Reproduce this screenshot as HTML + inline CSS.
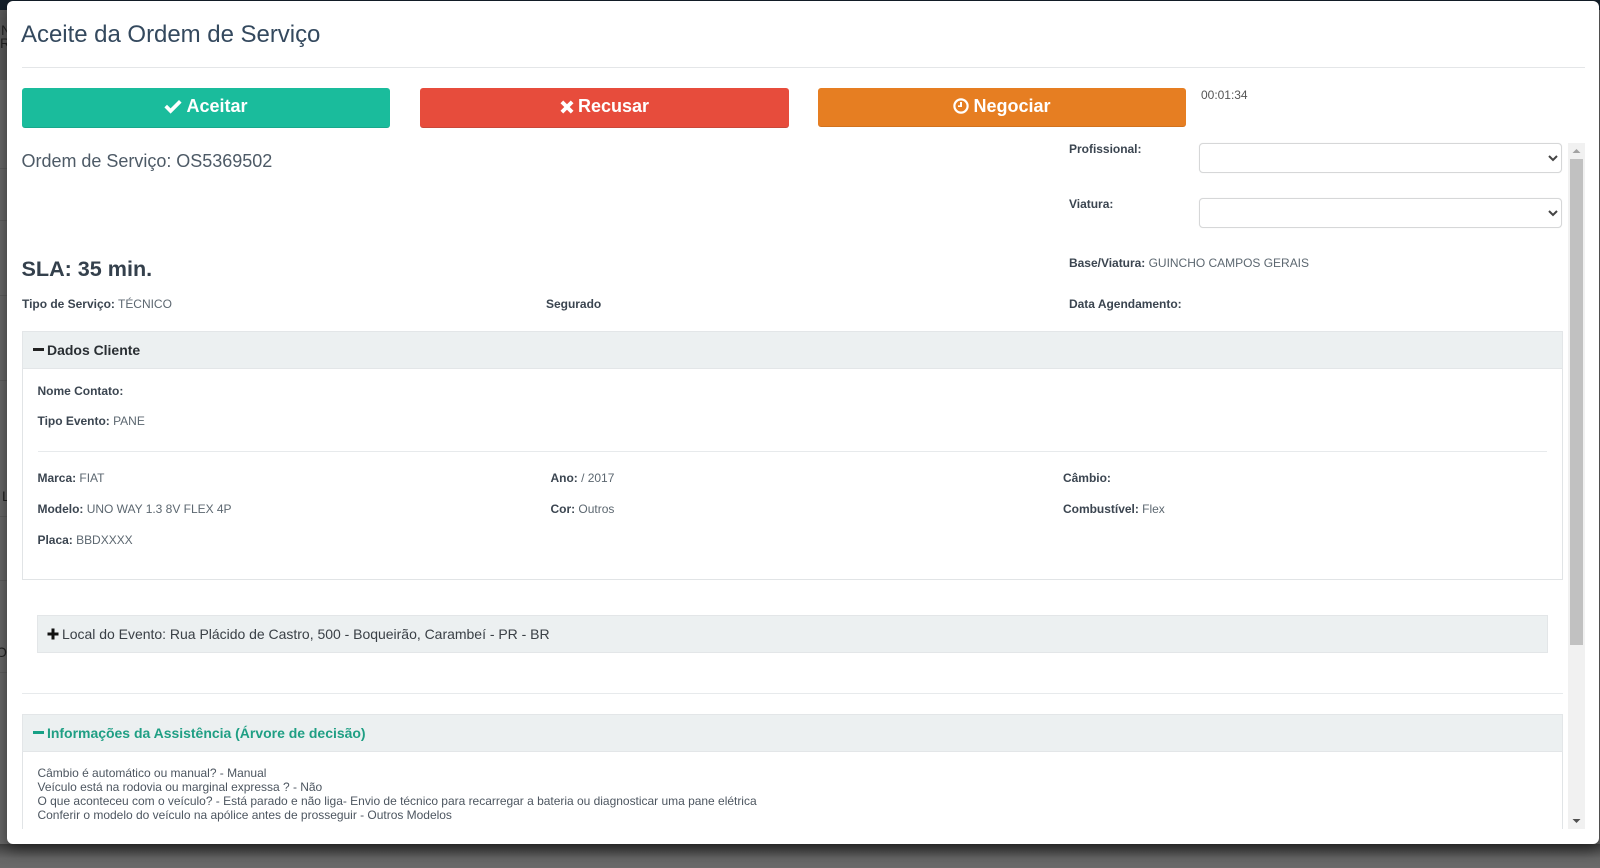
<!DOCTYPE html>
<html lang="pt-BR">
<head>
<meta charset="utf-8">
<title>Aceite da Ordem de Serviço</title>
<style>
html,body{margin:0;padding:0;width:1600px;height:868px;overflow:hidden;background:#666;font-family:"Liberation Sans",Arial,sans-serif;}
*{box-sizing:border-box;}
.abs,.t{position:absolute;}
.t{white-space:nowrap;font-size:12px;line-height:20px;height:20px;color:#5c6770;letter-spacing:-.015px;}
.t b{color:#3b4550;font-weight:bold;}
#modal{position:absolute;left:7px;top:1px;width:1592px;height:843px;background:#fff;border-radius:6px;box-shadow:0 5px 15px rgba(0,0,0,.5);}
#page{position:absolute;left:0;top:0;width:1600px;height:868px;overflow:hidden;filter:blur(.3px);}
.btn{position:absolute;top:88px;height:40px;width:368px;border-radius:3px;color:#fff;font-size:18px;font-weight:bold;display:flex;align-items:center;justify-content:center;padding-bottom:2px;}
.btn svg{margin-right:4px;fill:#fff;}
select{position:absolute;left:1199px;width:363px;height:30px;background:#fff;border:1px solid #d6d7d8;border-radius:4px;font-size:12px;color:#444;box-shadow:0 0 1px rgba(0,0,0,.1);}
.phead{position:absolute;background:#ecf0f1;border:1px solid #e3e6e8;}
.hr{position:absolute;height:1px;background:#e7eaec;}
</style>
</head>
<body>
<div id="page">
  <!-- backdrop -->
  <div class="abs" style="left:0;top:0;width:1600px;height:10px;background:#15202b;"></div>
  <div class="abs" style="left:0;top:10px;width:7px;height:70px;background:#5b5b5b;"></div>
  <div class="abs" style="left:0;top:80px;width:7px;height:788px;background:#686868;"></div>
  <div class="abs" style="left:0;top:168px;width:7px;height:1px;background:#5e5e5e;"></div>
  <div class="abs" style="left:0;top:220px;width:7px;height:1px;background:#5e5e5e;"></div>
  <div class="abs" style="left:0;top:295px;width:7px;height:1px;background:#5e5e5e;"></div>
  <div class="abs" style="left:0;top:380px;width:7px;height:1px;background:#5e5e5e;"></div>
  <div class="abs" style="left:0;top:516px;width:7px;height:1px;background:#5e5e5e;"></div>
  <div class="abs" style="left:0;top:580px;width:7px;height:1px;background:#5e5e5e;"></div>
  <div class="abs" style="left:0;top:672px;width:7px;height:1px;background:#5e5e5e;"></div>
  <div class="t" style="left:1px;top:20px;font-size:14px;color:#222;">N</div>
  <div class="t" style="left:0;top:33px;font-size:14px;color:#222;">R</div>
  <div class="t" style="left:2px;top:486px;font-size:14px;color:#222;">L</div>
  <div class="t" style="left:-4px;top:642px;font-size:14px;color:#222;">O</div>
  <div class="abs" style="left:0;top:844px;width:1600px;height:24px;background:linear-gradient(#3f3f3f,#666 60%,#6a6a6a);"></div>

  <div id="modal"></div>

  <!-- header -->
  <div class="t" style="left:21px;top:20px;height:30px;line-height:30px;font-size:24px;color:#34495e;letter-spacing:-.03px;">Aceite da Ordem de Serviço</div>
  <div class="hr" style="left:22px;top:67px;width:1563px;background:#e4e6e8;"></div>

  <!-- buttons -->
  <div class="btn" style="left:22px;background:#1abc9c;border-bottom:1px solid #18a88c;">
    <svg width="18" height="15" viewBox="0 0 18 15"><path d="M6.6 14.6 L0.4 8.4 L3 5.8 L6.6 9.4 L15 1 L17.6 3.6 Z"/></svg>Aceitar
  </div>
  <div class="btn" style="left:420px;width:369px;background:#e74c3c;border-bottom:1px solid #c9483a;">
    <svg width="14" height="14" viewBox="0 0 14 14"><path d="M0.5 3.2 L3.2 0.5 L7 4.3 L10.8 0.5 L13.5 3.2 L9.7 7 L13.5 10.8 L10.8 13.5 L7 9.7 L3.2 13.5 L0.5 10.8 L4.3 7 Z"/></svg>Recusar
  </div>
  <div class="btn" style="left:818px;height:39px;background:#e67e22;border-bottom:1px solid #d1721e;">
    <svg width="16" height="16" viewBox="0 0 16 16"><path fill-rule="evenodd" d="M8 0.3a7.7 7.7 0 1 1 0 15.4a7.7 7.7 0 1 1 0-15.4zM8 2.5a5.5 5.5 0 1 0 0 11a5.5 5.5 0 1 0 0-11zM7 4h2v5H5V7.4h2z"/></svg>Negociar
  </div>
  <div class="t" style="left:1201px;top:85px;color:#555;">00:01:34</div>

  <!-- top info -->
  <div class="t" style="left:21.5px;top:150px;height:22px;line-height:22px;font-size:18px;color:#4d5a66;">Ordem de Serviço: OS5369502</div>
  <div class="t" style="left:21.5px;top:254px;height:30px;line-height:30px;font-size:21.6px;font-weight:bold;color:#34404c;">SLA: 35 min.</div>
  <div class="t" style="left:22px;top:294px;"><b>Tipo de Serviço:</b> TÉCNICO</div>
  <div class="t" style="left:546px;top:294px;"><b>Segurado</b></div>
  <div class="t" style="left:1069px;top:139px;"><b>Profissional:</b></div>
  <div class="t" style="left:1069px;top:194px;"><b>Viatura:</b></div>
  <div class="t" style="left:1069px;top:253px;"><b>Base/Viatura:</b> GUINCHO CAMPOS GERAIS</div>
  <div class="t" style="left:1069px;top:294px;"><b>Data Agendamento:</b></div>
  <select style="top:143px;"><option></option></select>
  <select style="top:198px;"><option></option></select>

  <!-- Dados Cliente -->
  <div class="abs" style="left:22px;top:331px;width:1541px;height:249px;border:1px solid #e1e4e6;"></div>
  <div class="phead" style="left:22px;top:331px;width:1541px;height:38px;"></div>
  <div class="abs" style="left:33px;top:348px;width:11px;height:3px;background:#222;"></div>
  <div class="t" style="left:47px;top:340px;font-size:14px;font-weight:bold;color:#2a2f33;">Dados Cliente</div>
  <div class="t" style="left:37.5px;top:380.5px;"><b>Nome Contato:</b></div>
  <div class="t" style="left:37.5px;top:411px;"><b>Tipo Evento:</b> PANE</div>
  <div class="hr" style="left:38px;top:451px;width:1509px;"></div>
  <div class="t" style="left:37.5px;top:468px;"><b>Marca:</b> FIAT</div>
  <div class="t" style="left:37.5px;top:499px;"><b>Modelo:</b> UNO WAY 1.3 8V FLEX 4P</div>
  <div class="t" style="left:37.5px;top:530px;"><b>Placa:</b> BBDXXXX</div>
  <div class="t" style="left:550.5px;top:468px;"><b>Ano:</b> / 2017</div>
  <div class="t" style="left:550.5px;top:499px;"><b>Cor:</b> Outros</div>
  <div class="t" style="left:1063px;top:468px;"><b>Câmbio:</b></div>
  <div class="t" style="left:1063px;top:499px;"><b>Combustível:</b> Flex</div>

  <!-- Local -->
  <div class="phead" style="left:37px;top:615px;width:1511px;height:38px;"></div>
  <svg class="abs" style="left:47px;top:628px;" width="12" height="12" viewBox="0 0 12 12"><path fill="#111" d="M4.5 0.5h3v4h4v3h-4v4h-3v-4h-4v-3h4z"/></svg>
  <div class="t" style="left:62px;top:624px;font-size:14px;color:#3a4046;">Local do Evento: Rua Plácido de Castro, 500 - Boqueirão, Carambeí - PR - BR</div>

  <div class="hr" style="left:22px;top:693px;width:1541px;"></div>

  <!-- Informações -->
  <div class="abs" style="left:22px;top:714px;width:1541px;height:115px;border:1px solid #e1e4e6;border-bottom:none;"></div>
  <div class="phead" style="left:22px;top:714px;width:1541px;height:38px;"></div>
  <div class="abs" style="left:33px;top:731px;width:11px;height:3px;background:#16a085;"></div>
  <div class="t" style="left:47px;top:722.5px;font-size:14px;font-weight:bold;color:#1f9f84;">Informações da Assistência (Árvore de decisão)</div>
  <div class="t" style="left:37.5px;top:766px;height:14px;line-height:14px;color:#4d5660;">Câmbio é automático ou manual? - Manual</div>
  <div class="t" style="left:37.5px;top:780px;height:14px;line-height:14px;color:#4d5660;">Veículo está na rodovia ou marginal expressa ? - Não</div>
  <div class="t" style="left:37.5px;top:794px;height:14px;line-height:14px;color:#4d5660;">O que aconteceu com o veículo? - Está parado e não liga- Envio de técnico para recarregar a bateria ou diagnosticar uma pane elétrica</div>
  <div class="t" style="left:37.5px;top:808px;height:14px;line-height:14px;color:#4d5660;">Conferir o modelo do veículo na apólice antes de prosseguir - Outros Modelos</div>

  <!-- scrollbar -->
  <div class="abs" style="left:1568px;top:143px;width:17px;height:686px;background:#f1f1f1;"></div>
  <div class="abs" style="left:1570px;top:159px;width:13px;height:486px;background:#c1c1c1;"></div>
  <svg class="abs" style="left:1568px;top:143px;" width="17" height="17" viewBox="0 0 17 17"><path fill="#a3a3a3" d="M4.5 10 L8.5 6 L12.5 10 Z"/></svg>
  <svg class="abs" style="left:1568px;top:812px;" width="17" height="17" viewBox="0 0 17 17"><path fill="#505050" d="M4.5 7 L12.5 7 L8.5 11 Z"/></svg>
</div>
</body>
</html>
